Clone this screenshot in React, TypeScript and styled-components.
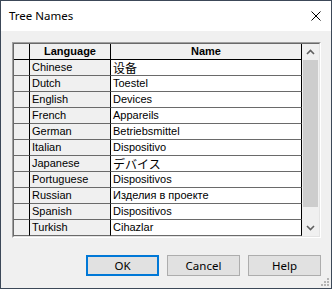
import React from 'react';
import styled, { createGlobalStyle } from 'styled-components';

const GlobalStyle = createGlobalStyle`
  html, body {
    margin: 0;
    padding: 0;
    background: #f0f0f0;
  }
`;

const rows: { lang: string; name: string; cjk?: string }[] = [
  { lang: 'Chinese', name: '设备', cjk: '"Noto Sans CJK SC"' },
  { lang: 'Dutch', name: 'Toestel' },
  { lang: 'English', name: 'Devices' },
  { lang: 'French', name: 'Appareils' },
  { lang: 'German', name: 'Betriebsmittel' },
  { lang: 'Italian', name: 'Dispositivo' },
  { lang: 'Japanese', name: 'デバイス', cjk: '"Noto Sans CJK JP"' },
  { lang: 'Portuguese', name: 'Dispositivos' },
  { lang: 'Russian', name: 'Изделия в проекте' },
  { lang: 'Spanish', name: 'Dispositivos' },
  { lang: 'Turkish', name: 'Cihazlar' },
];

const Window = styled.div`
  position: relative;
  width: 332px;
  height: 289px;
  box-sizing: border-box;
  border: 1px solid #3c4858;
  background: #f0f0f0;
  display: flex;
  flex-direction: column;
  font-family: 'Liberation Sans', Arial, sans-serif;
`;

const TitleBar = styled.div`
  height: 30px;
  background: #fff;
  display: flex;
  align-items: center;
  justify-content: space-between;
  padding: 0 10px 0 8px;
`;

const Title = styled.span`
  font-family: 'Noto Sans', sans-serif;
  font-size: 11.5px;
  color: #000;
  margin-top: -1px;
`;

const Body = styled.div`
  flex: 1;
  display: flex;
  flex-direction: column;
  padding: 11px 10px 0 11px;
`;

const GridFrame = styled.div`
  width: 309px;
  height: 196px;
  box-sizing: border-box;
  border: 1px solid;
  border-color: #a0a0a0 #ffffff #ffffff #a0a0a0;
`;

const GridInner = styled.div`
  height: 100%;
  box-sizing: border-box;
  border: 1px solid;
  border-color: #696969 #e3e3e3 #e3e3e3 #696969;
  display: flex;
`;

const Table = styled.div`
  flex: 1;
  display: grid;
  grid-template-columns: 16px 81px 191px;
  grid-auto-rows: 16px;
  align-content: start;
  font-size: 11px;
  color: #000;
`;

const Cell = styled.div<{ $kind: 'stub' | 'head' | 'lang' | 'name'; $header?: boolean; $font?: string }>`
  box-sizing: border-box;
  border-right: 1px solid #000;
  border-bottom: 1px solid ${(p) => (p.$header ? '#000' : '#6a6a6a')};
  background: ${(p) => (p.$kind === 'name' ? '#fff' : '#f0f0f0')};
  padding: 0 2px;
  display: flex;
  align-items: center;
  justify-content: ${(p) => (p.$kind === 'head' ? 'center' : 'flex-start')};
  font-weight: ${(p) => (p.$kind === 'head' ? 700 : 400)};
  font-family: ${(p) =>
    p.$font ? `${p.$font}, sans-serif` : `'Liberation Sans', Arial, sans-serif`};
  font-size: ${(p) => (p.$font ? '12px' : '11px')};
  white-space: nowrap;
  overflow: hidden;
  line-height: 15px;
`;

const ScrollBar = styled.div`
  width: 17px;
  background: #f0f0f0;
  display: flex;
  flex-direction: column;
  align-items: center;
`;

const Arrow = styled.div`
  height: 16px;
  width: 17px;
  display: flex;
  align-items: center;
  justify-content: center;
`;

const Thumb = styled.div`
  width: 15px;
  height: 147px;
  background: #cdcdcd;
`;

const Track = styled.div`
  flex: 1;
`;

const ButtonRow = styled.div`
  margin-top: 17px;
  display: flex;
  justify-content: flex-end;
  gap: 8px;
  width: 309px;
`;

const Button = styled.button<{ $default?: boolean }>`
  width: 73px;
  height: 21px;
  box-sizing: border-box;
  margin: 0;
  padding: 0;
  background: #e1e1e1;
  border: ${(p) => (p.$default ? '2px solid #0078d7' : '1px solid #adadad')};
  font-family: 'Noto Sans', sans-serif;
  font-size: 11.5px;
  color: #000;
  line-height: 1;
`;

const Grip = styled.svg`
  position: absolute;
  right: 2px;
  bottom: 2px;
`;

const ArrowIcon: React.FC<{ down?: boolean }> = ({ down }) => (
  <svg width="9" height="6" viewBox="0 0 9 6">
    <polyline
      points={down ? '1,1 4.5,4.5 8,1' : '1,5 4.5,1.5 8,5'}
      fill="none"
      stroke="#606060"
      strokeWidth="1.6"
    />
  </svg>
);

const App: React.FC = () => {
  return (
    <>
      <GlobalStyle />
      <Window>
        <TitleBar>
          <Title>Tree Names</Title>
          <svg width="10" height="10" viewBox="0 0 10 10">
            <path d="M0.5 0.5 L9.5 9.5 M9.5 0.5 L0.5 9.5" stroke="#000" strokeWidth="1" />
          </svg>
        </TitleBar>
        <Body>
          <GridFrame>
            <GridInner>
              <Table>
                <Cell $kind="stub" $header />
                <Cell $kind="head" $header>
                  Language
                </Cell>
                <Cell $kind="head" $header>
                  Name
                </Cell>
                {rows.map((r) => (
                  <React.Fragment key={r.lang}>
                    <Cell $kind="stub" />
                    <Cell $kind="lang">{r.lang}</Cell>
                    <Cell $kind="name" $font={r.cjk}>
                      {r.name}
                    </Cell>
                  </React.Fragment>
                ))}
              </Table>
              <ScrollBar>
                <Arrow>
                  <ArrowIcon />
                </Arrow>
                <Thumb />
                <Track />
                <Arrow>
                  <ArrowIcon down />
                </Arrow>
              </ScrollBar>
            </GridInner>
          </GridFrame>
          <ButtonRow>
            <Button $default>OK</Button>
            <Button>Cancel</Button>
            <Button>Help</Button>
          </ButtonRow>
        </Body>
        <Grip width="9" height="9" viewBox="0 0 9 9">
          <g fill="#b4b4b4">
            <rect x="7" y="1" width="2" height="2" />
            <rect x="4" y="4" width="2" height="2" />
            <rect x="7" y="4" width="2" height="2" />
            <rect x="1" y="7" width="2" height="2" />
            <rect x="4" y="7" width="2" height="2" />
            <rect x="7" y="7" width="2" height="2" />
          </g>
        </Grip>
      </Window>
    </>
  );
};

export default App;
